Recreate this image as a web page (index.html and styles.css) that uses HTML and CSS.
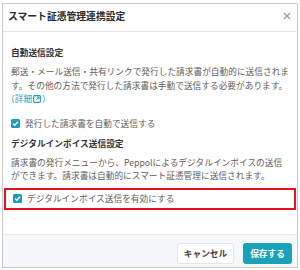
FILE: index.html
```html
<!DOCTYPE html>
<html lang="ja">
<head>
<meta charset="utf-8">
<link rel="stylesheet" href="styles.css">
</head>
<body>
<div class="dialog">
  <div class="header">
    <div class="title">スマート証憑管理連携設定</div>
    <svg class="close" width="8" height="8" viewBox="0 0 8 8"><path d="M1 1L7 7M7 1L1 7" stroke="#9a9a9a" stroke-width="1.2" fill="none"/></svg>
  </div>
  <div class="body">
    <div class="heading h1">自動送信設定</div>
    <p class="para">郵送・メール送信・共有リンクで発行した請求書が自動的に送信されま<br>す。その他の方法で発行した請求書は手動で送信する必要があります。</p>
    <div class="linkline"><span class="open">（</span><span class="linktext">詳細</span><svg class="ext" width="8" height="8" viewBox="0 0 8 8"><rect x="0.6" y="0.6" width="6.8" height="6.8" rx="0.8" fill="none" stroke="#2a9db3" stroke-width="1.1"/><path d="M3 5L6 2M4 2H6V4" stroke="#2a9db3" stroke-width="1" fill="none"/></svg><span class="close-p">）</span></div>
    <label class="check row1"><span class="box"><svg width="9" height="9" viewBox="0 0 9 9"><path d="M2 4.6L3.8 6.3L7 2.8" stroke="#fff" stroke-width="1.3" fill="none"/></svg></span>発行した請求書を自動で送信する</label>
    <div class="heading h2">デジタルインボイス送信設定</div>
    <p class="para p2">請求書の発行メニューから、Peppolによるデジタルインボイスの送信<br>ができます。請求書は自動的にスマート証憑管理に送信されます。</p>
  </div>
  <div class="highlight">
    <label class="check"><span class="box"><svg width="9" height="9" viewBox="0 0 9 9"><path d="M2 4.6L3.8 6.3L7 2.8" stroke="#fff" stroke-width="1.3" fill="none"/></svg></span>デジタルインボイス送信を有効にする</label>
  </div>
  <div class="spacer"></div>
  <div class="footer">
    <button class="btn cancel">キャンセル</button>
    <button class="btn save">保存する</button>
  </div>
</div>
</body>
</html>
```
FILE: styles.css
```css
* { box-sizing: border-box; }
html, body { margin: 0; padding: 0; background: #fff; }
body {
  font-family: "Noto Sans CJK JP", "Noto Sans", sans-serif;
  width: 300px;
  height: 270px;
  overflow: hidden;
}
.dialog {
  margin: 3px 2px 0 2px;
  width: 296px;
  height: 265px;
  border: 1px solid #c9c9c9;
  display: flex;
  flex-direction: column;
  background: #fff;
}
.header {
  height: 28px;
  border-bottom: 1px solid #e4e7eb;
  display: flex;
  align-items: center;
  justify-content: space-between;
  padding: 0 6px 4px 5px;
}
.title {
  font-size: 9.8px;
  font-weight: 700;
  color: #2b2b2b;
  line-height: 14px;
}
.close { display: block; margin-top: 1px; }
.body {
  padding: 0 6px 0 8px;
}
.heading {
  font-size: 8.7px;
  font-weight: 700;
  color: #333;
  line-height: 13px;
}
.h1 { margin-top: 14px; }
.h2 { margin-top: 6px; }
.para {
  margin: 6px 0 0 0;
  font-size: 8.7px;
  line-height: 13.5px;
  color: #606060;
  white-space: nowrap;
}
.p2 { margin-top: 6px; }
.linkline {
  display: flex;
  align-items: center;
  height: 13.5px;
  font-size: 8.7px;
  line-height: 13.5px;
  color: #2a9db3;
  white-space: nowrap;
}
.open { margin-left: -5px; color: #2a9db3; }
.close-p { color: #2a9db3; margin-left: 1px; }
.linktext { color: #2a9db3; }
.ext { display: block; margin: 0 0 0 1px; flex: none; }
.check {
  display: flex;
  align-items: center;
  font-size: 8.7px;
  line-height: 14px;
  color: #606060;
  white-space: nowrap;
}
.row1 { margin-top: 11px; }
.box {
  width: 9px;
  height: 9px;
  background: #1b9fb4;
  border-radius: 1.5px;
  margin-right: 5px;
  display: flex;
}
.highlight {
  margin: 5px 1px 0 1px;
  height: 22px;
  border: 2px solid #e8101c;
  display: flex;
  align-items: center;
  padding-left: 7px;
}
.spacer { flex: 1; }
.footer {
  height: 33px;
  border-top: 1px solid #e6e9ee;
  background: #f5f8fb;
  display: flex;
  justify-content: flex-end;
  align-items: flex-start;
  gap: 9px;
  padding: 8px 5px 0 0;
}
.btn {
  font-family: "Noto Sans CJK JP", "Noto Sans", sans-serif;
  font-size: 8.7px;
  font-weight: 700;
  height: 21px;
  border-radius: 2.5px;
  padding: 0;
  cursor: pointer;
}
.cancel {
  width: 57px;
  background: #fff;
  border: 1px solid #e2e5e9;
  color: #444;
}
.save {
  width: 49px;
  background: #1aa3b8;
  border: 1px solid #1aa3b8;
  color: #fff;
}
```
